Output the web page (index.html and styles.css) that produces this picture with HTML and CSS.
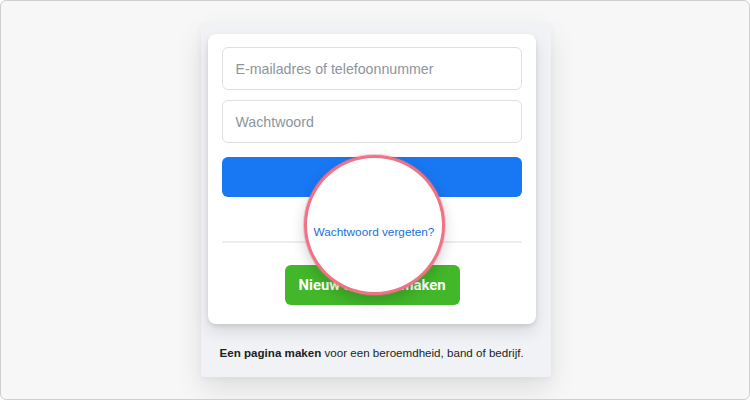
FILE: index.html
```html
<!DOCTYPE html>
<html lang="nl">
<head>
<meta charset="utf-8">
<link rel="stylesheet" href="styles.css">
</head>
<body>
<div class="frame">
  <div class="panel">
    <div class="card">
      <div class="input">E-mailadres of telefoonnummer</div>
      <div class="input">Wachtwoord</div>
      <div class="login"></div>
      <div class="forgot"></div>
      <div class="divider"></div>
      <div class="create-row">
        <div class="create">Nieuw account maken</div>
      </div>
      <div class="lens"><span class="lens-link">Wachtwoord vergeten?</span></div>
    </div>
    <p class="footer"><b>Een pagina maken</b> voor een beroemdheid, band of bedrijf.</p>
  </div>
</div>
</body>
</html>
```
FILE: styles.css
```css
* { box-sizing: border-box; }
html, body { margin: 0; padding: 0; }
body {
  font-family: "Liberation Sans", Arial, Helvetica, sans-serif;
  background: #ffffff;
}
.frame {
  width: 750px;
  height: 400px;
  border: 1px solid #cfcfcf;
  border-radius: 6px;
  background: #f7f7f7;
  padding-top: 22px;
  display: flex;
  justify-content: center;
  overflow: hidden;
}
.panel {
  width: 350px;
  height: 354px;
  margin-left: 1px;
  background: #f0f2f5;
  border-radius: 4px;
  box-shadow: 0 12px 28px rgba(0,0,0,0.10), 0 2px 6px rgba(0,0,0,0.04);
  padding: 11px 15px 0 7px;
}
.card {
  position: relative;
  background: #ffffff;
  border-radius: 8px;
  box-shadow: 0 2px 4px rgba(0,0,0,0.1), 0 8px 16px rgba(0,0,0,0.1);
  padding: 13px 14px 21px 14px;
  height: 290px;
}
.input {
  height: 43px;
  border: 1px solid #dddfe2;
  border-radius: 6px;
  padding: 0 13px;
  display: flex;
  align-items: center;
  font-size: 14.2px;
  color: #8d949e;
  margin-bottom: 10px;
}
.login {
  margin-top: 14px;
  height: 40px;
  background: #1877f2;
  border-radius: 6px;
}
.forgot { height: 44px; }
.divider {
  height: 2px;
  background: #ebedf0;
}
.create-row {
  display: flex;
  justify-content: center;
  margin-top: 22px;
  padding-left: 1px;
}
.create {
  width: 175px;
  height: 40px;
  background: #42b72a;
  border-radius: 6px;
  color: #ffffff;
  font-family: Roboto, "Liberation Sans", Arial, sans-serif;
  font-weight: 700;
  font-size: 14.8px;
  display: flex;
  align-items: center;
  justify-content: center;
  white-space: nowrap;
}
.lens {
  position: absolute;
  left: 96px;
  top: 121px;
  width: 141px;
  height: 140px;
  border-radius: 50%;
  background: #ffffff;
  border: 3px solid #ef7385;
  box-shadow: 0 0 0 1px rgba(239,115,133,0.35), 0 6px 14px rgba(0,0,0,0.18);
  display: flex;
  align-items: center;
  justify-content: center;
  padding-top: 14px;
}
.lens-link {
  font-size: 11.8px;
  color: #1a6fd9;
  white-space: nowrap;
}
.footer {
  margin: 22px 0 0 12px;
  font-size: 11.6px;
  color: #1c1e21;
  white-space: nowrap;
}
.footer b { font-weight: 700; }
```
